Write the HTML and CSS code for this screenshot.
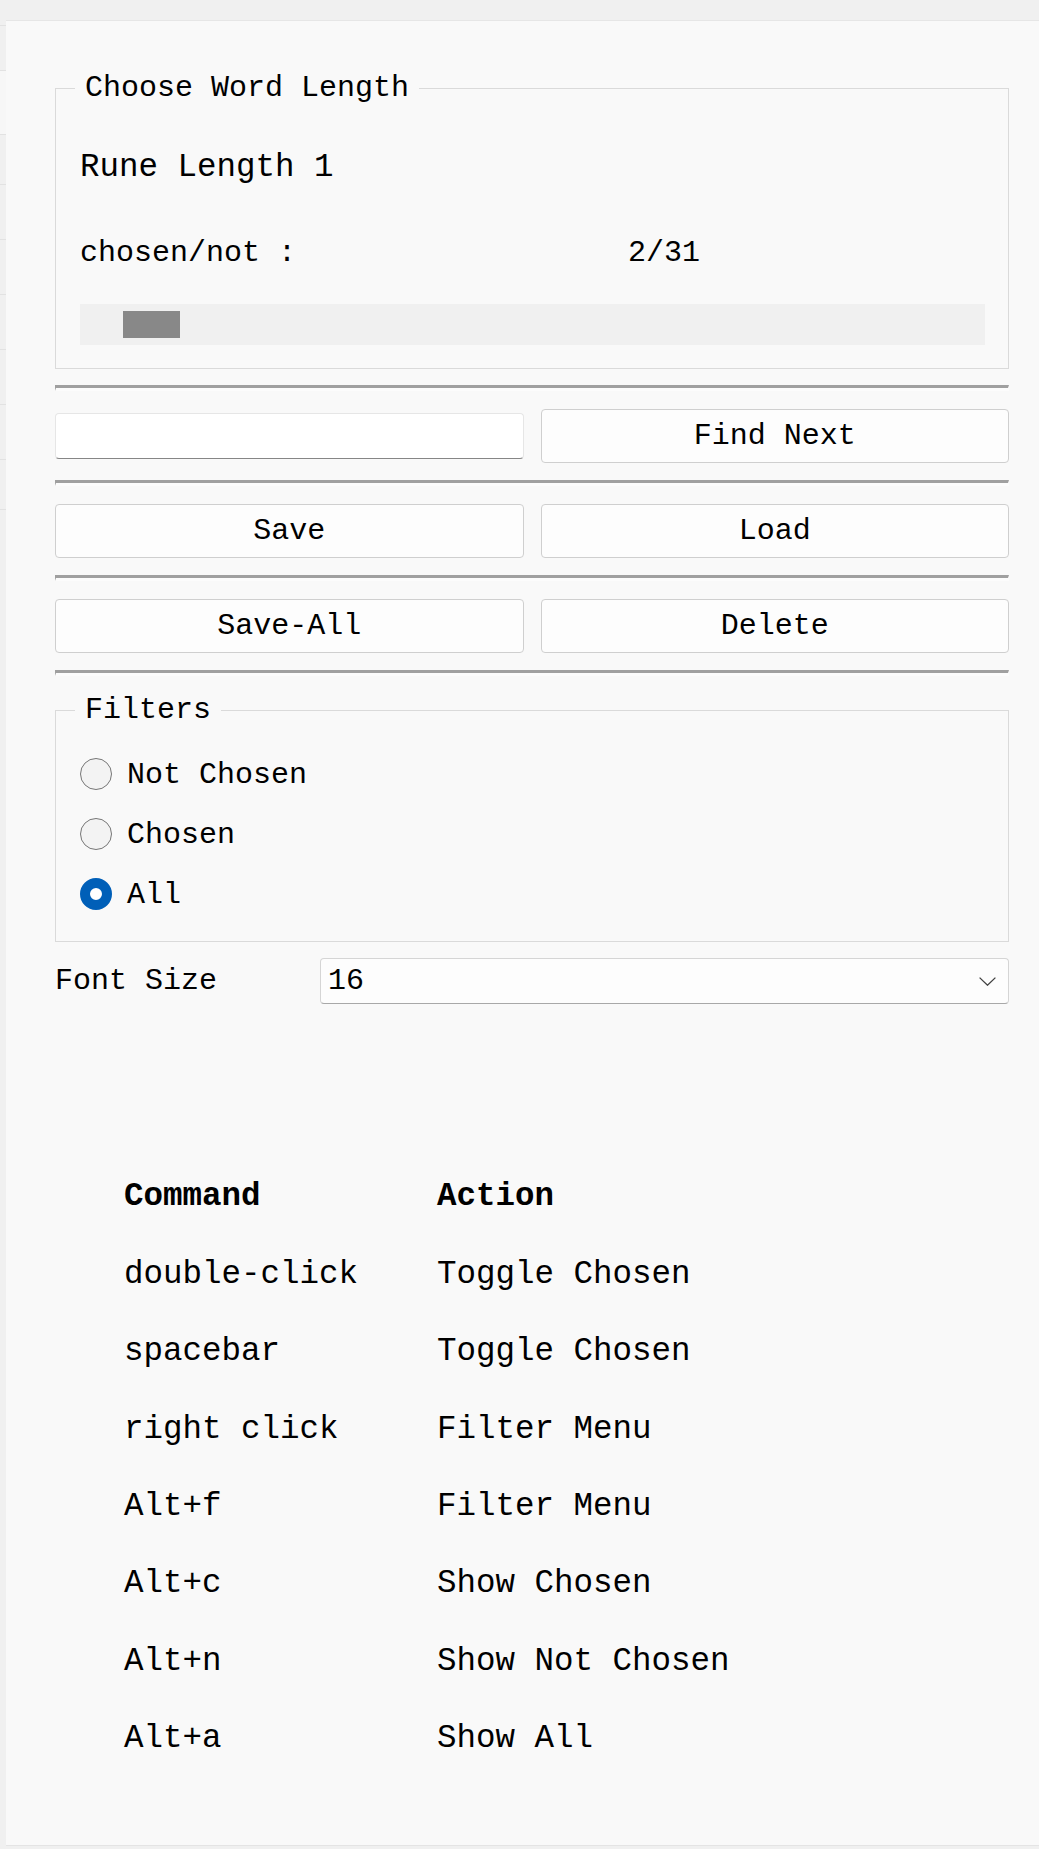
FILE: index.html
```html
<!DOCTYPE html>
<html lang="en">
<head>
<meta charset="utf-8">
<title>Word Length</title>
<link rel="stylesheet" href="styles.css">
</head>
<body>
<div class="topbar"></div>
<div class="main">
  <div class="strip">
    <div class="srow h0"></div>
    <div class="srow h1"></div>
    <div class="srow h2 sel"></div>
    <div class="srow h3"></div>
    <div class="srow h4"></div>
    <div class="srow h4"></div>
    <div class="srow h4"></div>
    <div class="srow h4"></div>
    <div class="srow h4"></div>
    <div class="srow h3"></div>
  </div>
  <div class="panel">
    <fieldset class="box box-len">
      <legend>Choose Word Length</legend>
      <div class="fs-body">
        <div class="rune">Rune Length 1</div>
        <div class="stat"><span>chosen/not :</span><span>2/31</span></div>
        <div class="track"><div class="thumb"></div></div>
      </div>
    </fieldset>
    <hr class="sep first">
    <div class="row2">
      <input class="search" type="text" aria-label="search">
      <button class="btn">Find Next</button>
    </div>
    <hr class="sep">
    <div class="row2">
      <button class="btn">Save</button>
      <button class="btn">Load</button>
    </div>
    <hr class="sep">
    <div class="row2">
      <button class="btn">Save-All</button>
      <button class="btn">Delete</button>
    </div>
    <hr class="sep">
    <fieldset class="box box-filters">
      <legend>Filters</legend>
      <div class="radios">
        <div class="radio"><span class="dot"></span><span>Not Chosen</span></div>
        <div class="radio"><span class="dot"></span><span>Chosen</span></div>
        <div class="radio"><span class="dot on"></span><span>All</span></div>
      </div>
    </fieldset>
    <div class="fontsize">
      <span>Font Size</span>
      <div class="select"><span>16</span>
        <svg class="chev" width="17" height="9" viewBox="0 0 17 9"><path d="M0.6 0.6 L8.5 8.2 L16.4 0.6" fill="none" stroke="#404040" stroke-width="1.3"/></svg>
      </div>
    </div>
    <table class="keys">
      <tr><th>Command</th><th>Action</th></tr>
      <tr><td>double-click</td><td>Toggle Chosen</td></tr>
      <tr><td>spacebar</td><td>Toggle Chosen</td></tr>
      <tr><td>right click</td><td>Filter Menu</td></tr>
      <tr><td>Alt+f</td><td>Filter Menu</td></tr>
      <tr><td>Alt+c</td><td>Show Chosen</td></tr>
      <tr><td>Alt+n</td><td>Show Not Chosen</td></tr>
      <tr><td>Alt+a</td><td>Show All</td></tr>
    </table>
  </div>
</div>
</body>
</html>
```

FILE: styles.css
```css
* { box-sizing: border-box; }
html, body { margin: 0; padding: 0; }
body {
  width: 1039px;
  height: 1849px;
  overflow: hidden;
  background: #f0f0f0;
  font-family: "Courier New", "Nimbus Mono PS", "Nimbus Mono L", "FreeMono", "Courier 10 Pitch", "Liberation Mono", monospace;
  color: #000;
}
.topbar { height: 20px; background: #f0f0f0; }
.main { display: flex; }
.strip { width: 6px; flex: none; display: flex; flex-direction: column; }
.srow { border-bottom: 1px solid #e2e2e2; }
.srow.h0 { height: 6px; }
.srow.h1 { height: 45px; }
.srow.h2 { height: 64px; }
.srow.h3 { height: 50px; }
.srow.h4 { height: 55px; }
.srow.sel { background: #f7f7f7; }
.panel {
  flex: 1;
  height: 1826px;
  background: #f9f9f9;
  border-top: 1px solid #e6e6e6;
  border-bottom: 1px solid #e4e4e4;
  padding: 50px 30px 0 49px;
}
.box {
  margin: 0;
  min-width: 0;
  border: 1px solid #dadada;
  padding: 0 23px 23px 19px;
}
.box legend {
  font-size: 30px;
  line-height: 34px;
  padding: 0 10px;
  margin: 0;
}
.fs-body { padding: 43.5px 0 0 5px; }
.rune { font-size: 32.5px; line-height: 37px; }
.stat {
  margin-top: 50px;
  display: grid;
  grid-template-columns: 548px 1fr;
  font-size: 30px;
  line-height: 34px;
}
.track {
  margin-top: 34.5px;
  height: 41px;
  background: #f0f0f0;
  display: flex;
  align-items: center;
  padding-left: 43px;
}
.thumb { width: 57px; height: 27px; background: #888888; }
.sep {
  margin: 0;
  height: 0;
  border-top: 3px solid #a0a0a0;
  border-bottom: 3px solid #fcfcfc;
  border-left: 1px solid #a0a0a0;
  border-right: 1px solid #fcfcfc;
}
.sep.first { margin-top: 16px; }
.row2 {
  display: grid;
  grid-template-columns: 1fr 1fr;
  column-gap: 17px;
  align-items: center;
  margin: 18px 0 17px;
}
.btn {
  height: 54px;
  margin: 0;
  padding: 1px 0 0;
  font-family: inherit;
  font-size: 30px;
  line-height: 51px;
  color: #000;
  background: #fdfdfd;
  border: 1px solid #cfcfcf;
  border-radius: 4px;
}
.search {
  height: 46px;
  margin: 0;
  background: #ffffff;
  border: 1px solid #e6e6e6;
  border-bottom-color: #868686;
  border-radius: 4px;
}
.box-filters { margin-top: 17px; padding-bottom: 17px; }
.radios { padding: 17px 0 0 5px; }
.radio {
  height: 60px;
  display: flex;
  align-items: center;
  gap: 15px;
  font-size: 30px;
  line-height: 34px;
}
.radio span:last-child { padding-top: 2px; }
.dot {
  width: 32px;
  height: 32px;
  flex: none;
  border-radius: 50%;
  border: 1.5px solid #767676;
  background: #f3f3f3;
}
.dot.on {
  border: 10px solid #005fb8;
  background: #ffffff;
}
.fontsize {
  margin-top: 16px;
  display: grid;
  grid-template-columns: 265px 1fr;
  align-items: center;
  font-size: 30px;
  line-height: 34px;
}
.select {
  height: 46px;
  display: flex;
  align-items: center;
  justify-content: space-between;
  padding: 0 12px 0 7px;
  background: #fdfdfd;
  border: 1px solid #d5d5d5;
  border-bottom-color: #a8a8a8;
  border-radius: 4px;
}
.chev { display: block; }
.keys {
  margin: 154.4px 0 0 69px;
  border-collapse: collapse;
  border-spacing: 0;
  font-size: 32.5px;
  line-height: 37.4px;
}
.keys th, .keys td {
  padding: 20px 0;
  text-align: left;
  vertical-align: top;
}
.keys th { font-weight: bold; }
.keys th:first-child, .keys td:first-child { width: 313px; }
```
